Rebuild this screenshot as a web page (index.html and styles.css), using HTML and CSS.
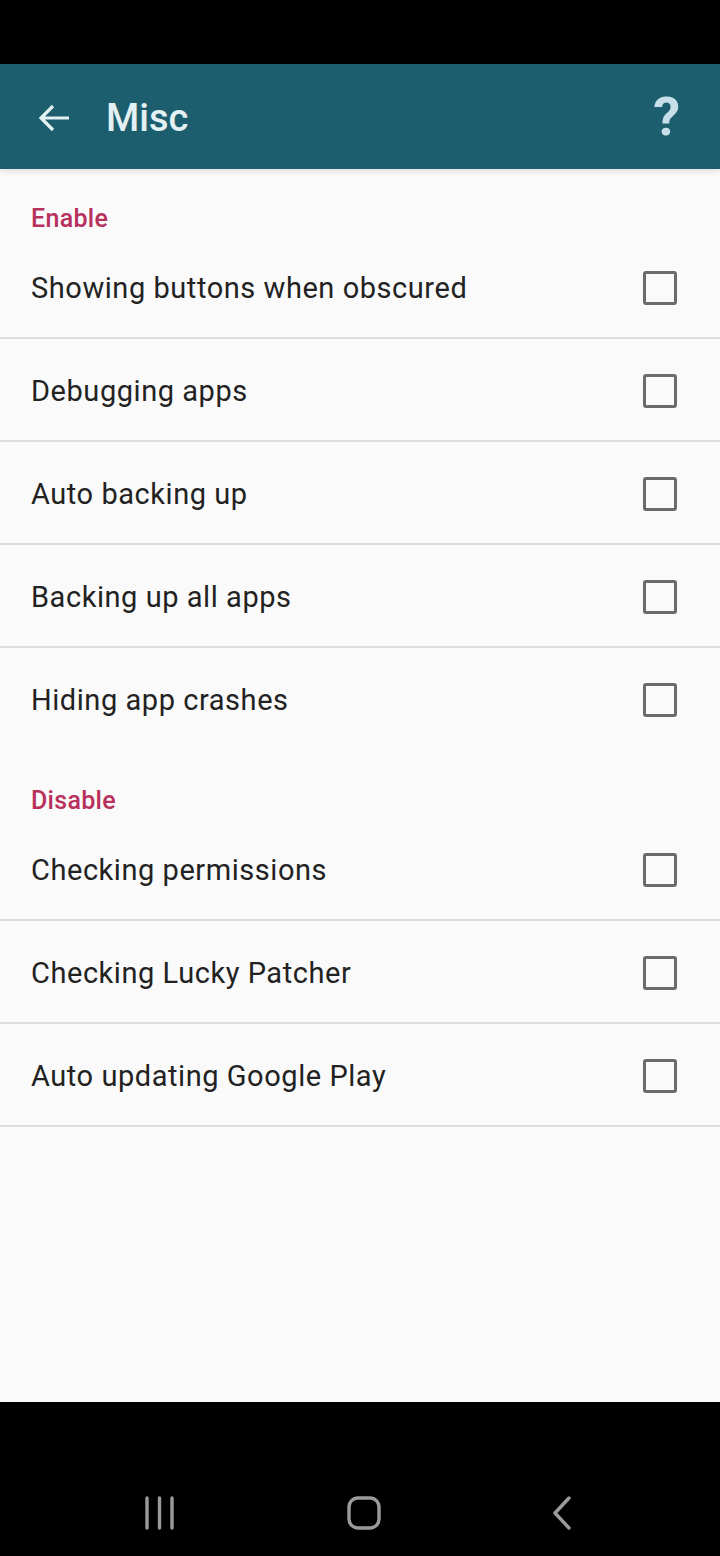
FILE: index.html
```html
<!DOCTYPE html>
<html>
<head>
<meta charset="utf-8">
<link rel="stylesheet" href="styles.css">
</head>
<body>
<div class="screen">
  <div class="statusbar"></div>
  <header class="appbar">
    <svg class="back" width="34" height="30" viewBox="0 0 34 30"><path d="M32 15H4M16 3L4 15l12 12" fill="none" stroke="#e3f0f4" stroke-width="3.2"/></svg>
    <h1 class="title">Misc</h1>
    <span class="help">?</span>
  </header>
  <main class="content">
    <div class="cat">Enable</div>
    <div class="row div"><span class="label">Showing buttons when obscured</span><span class="box"></span></div>
    <div class="row div"><span class="label">Debugging apps</span><span class="box"></span></div>
    <div class="row div"><span class="label">Auto backing up</span><span class="box"></span></div>
    <div class="row div"><span class="label">Backing up all apps</span><span class="box"></span></div>
    <div class="row"><span class="label">Hiding app crashes</span><span class="box"></span></div>
    <div class="cat">Disable</div>
    <div class="row div"><span class="label">Checking permissions</span><span class="box"></span></div>
    <div class="row div"><span class="label">Checking Lucky Patcher</span><span class="box"></span></div>
    <div class="row div"><span class="label">Auto updating Google Play</span><span class="box"></span></div>
  </main>
  <nav class="navbar">
    <svg width="32" height="34" viewBox="0 0 32 34"><path d="M3 2v30M15.5 2v30M28 2v30" stroke="#9b9b9b" stroke-width="3.4" stroke-linecap="round"/></svg>
    <svg width="34" height="34" viewBox="0 0 34 34"><rect x="2" y="2" width="30" height="30" rx="9" fill="none" stroke="#9b9b9b" stroke-width="3.4"/></svg>
    <svg width="22" height="34" viewBox="0 0 22 34"><path d="M18 2L4 17l14 15" fill="none" stroke="#9b9b9b" stroke-width="3.4" stroke-linecap="round" stroke-linejoin="round"/></svg>
  </nav>
</div>
</body>
</html>
```
FILE: styles.css
```css
html, body {
  margin: 0;
  padding: 0;
  background: #000;
}
.screen {
  width: 720px;
  height: 1556px;
  display: flex;
  flex-direction: column;
  font-family: Roboto, "Noto Sans", sans-serif;
}
.statusbar {
  height: 64px;
  background: #000;
  flex: none;
}
.appbar {
  height: 105px;
  flex: none;
  background: #1d5e6e;
  display: flex;
  align-items: center;
  padding: 0 40px 0 37px;
  box-sizing: border-box;
  position: relative;
  z-index: 1;
  box-shadow: 0 2px 6px rgba(0,0,0,0.12);
}
.back {
  flex: none;
  margin-top: 2px;
}
.title {
  margin: 2px 0 0 35px;
  font-size: 38px;
  font-weight: 500;
  color: #e3f0f4;
  flex: 1;
  letter-spacing: 0;
}
.help {
  font-size: 54px;
  font-weight: 700;
  color: #c6dfe8;
  line-height: 1;
}
.content {
  flex: none;
  height: 1233px;
  background: #fafafa;
}
.cat {
  height: 67px;
  box-sizing: border-box;
  padding: 34px 0 0 31px;
  font-size: 25px;
  font-weight: 500;
  color: #b8305c;
  line-height: 32px;
  letter-spacing: 0.3px;
}
.row {
  height: 103px;
  box-sizing: border-box;
  display: flex;
  align-items: center;
  justify-content: space-between;
  padding: 0 43px 0 31px;
}
.row.div {
  border-bottom: 2px solid #dedede;
  padding-top: 2px;
}
.label {
  font-size: 29px;
  color: #222;
  letter-spacing: 0.55px;
}
.box {
  width: 34px;
  height: 34px;
  box-sizing: border-box;
  border: 3.5px solid #6b6b6b;
  border-radius: 3px;
  flex: none;
}
.navbar {
  flex: 1;
  background: #000;
  display: flex;
  align-items: flex-start;
  justify-content: space-between;
  padding: 94px 147px 0 144px;
  box-sizing: border-box;
}
```
